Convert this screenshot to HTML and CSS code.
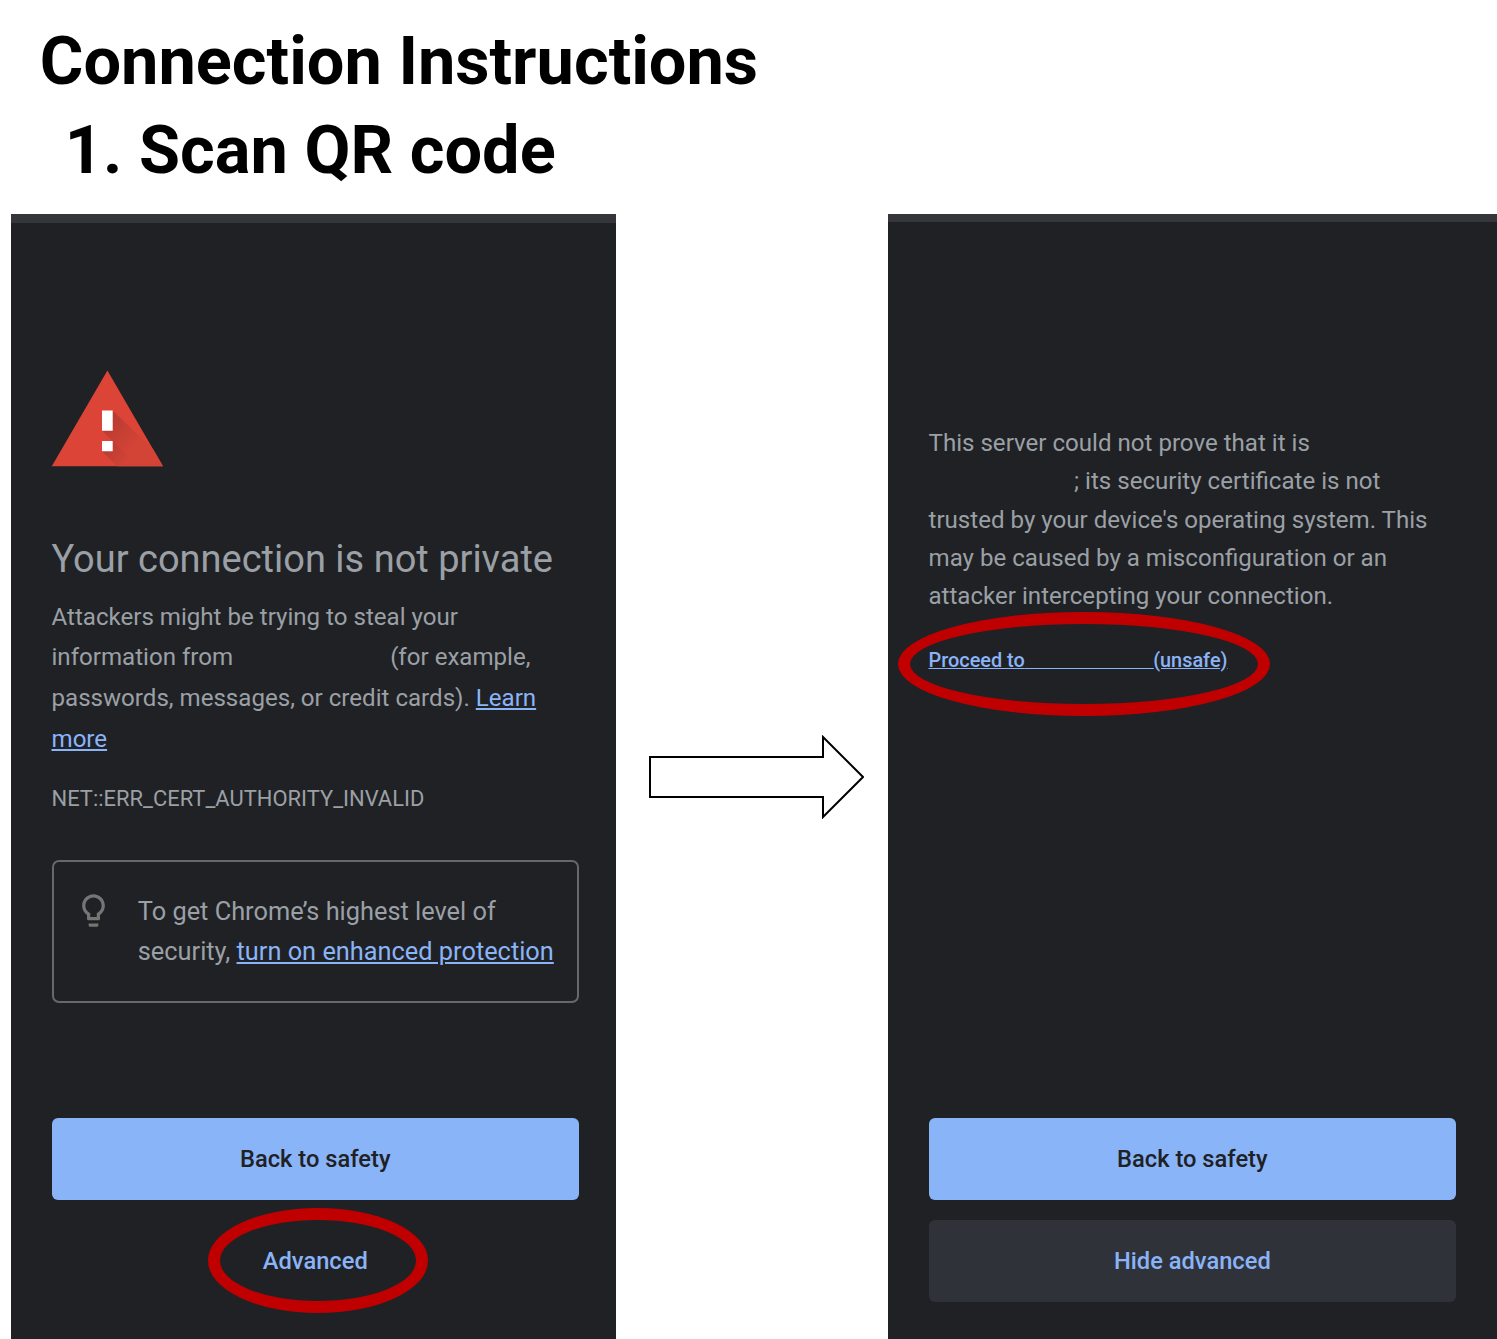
FILE: index.html
```
<!DOCTYPE html>
<html lang="en">
<head>
<meta charset="utf-8">
<title>Connection Instructions</title>
<link rel="stylesheet" href="styles.css">
</head>
<body>
<header class="header">
  <h1 class="heading">Connection Instructions</h1>
  <h2 class="heading step"><span class="step-number">1.</span><span>Scan QR code</span></h2>
</header>
<main class="screens">
  <section class="phone phone-warning">
    <svg class="warning-icon" viewBox="0 0 112 97" aria-hidden="true">
      <defs>
        <linearGradient id="shade" gradientUnits="userSpaceOnUse" x1="55" y1="52" x2="80" y2="77">
          <stop offset="0" stop-color="#b83c32"/>
          <stop offset="1" stop-color="#d34336"/>
        </linearGradient>
        <linearGradient id="shade-dot" gradientUnits="userSpaceOnUse" x1="55" y1="76" x2="72" y2="93">
          <stop offset="0" stop-color="#b83c32"/>
          <stop offset="1" stop-color="#d34336"/>
        </linearGradient>
      </defs>
      <path fill="#db4437" d="M55.4 .6 111 96.3H-.2z"/>
      <path fill="url(#shade)" d="M60.7 40.6 87.5 66.5 101.4 79.8 111 96.3H86L50 60.6z"/>
      <path fill="url(#shade-dot)" d="M60.7 71 86 96.3H65L50 81.2z"/>
      <path fill="#fff" d="M50 40.4h10.7v20.4H50zM50 71h10.7v10.2H50z"/>
    </svg>
    <h3 class="title">Your connection is not private</h3>
    <p class="copy">Attackers might be trying to steal your<br>information from<span class="blank-host"></span>(for example,<br>passwords, messages, or credit cards). <a class="link">Learn<br>more</a></p>
    <p class="error-code">NET::ERR_CERT_AUTHORITY_INVALID</p>
    <div class="tip">
      <svg class="bulb" viewBox="0 0 24 24" aria-hidden="true"><path fill="#757575" d="M9 21c0 .55.45 1 1 1h4c.55 0 1-.45 1-1v-1H9v1zm3-19C8.14 2 5 5.14 5 9c0 2.38 1.19 4.47 3 5.74V17c0 .55.45 1 1 1h6c.55 0 1-.45 1-1v-2.26c1.81-1.27 3-3.36 3-5.74 0-3.86-3.14-7-7-7zm2.85 11.1l-.85.6V16h-4v-2.3l-.85-.6C7.8 12.16 7 10.63 7 9c0-2.76 2.24-5 5-5s5 2.24 5 5c0 1.63-.8 3.16-2.15 4.1z"/></svg>
      <p class="tip-text">To get Chrome’s highest level of<br>security, <a class="link">turn on enhanced protection</a></p>
    </div>
    <div class="actions">
      <div class="button primary">Back to safety</div>
      <div class="button plain">Advanced<span class="ring ring-advanced"></span></div>
    </div>
  </section>
  <svg class="arrow" viewBox="0 0 216 84" aria-hidden="true"><path fill="#fff" stroke="#000" stroke-width="2" d="M2 22H175V2L215 42 175 82V62H2z"/></svg>
  <section class="phone phone-details">
    <p class="details">This server could not prove that it is<br><span class="blank-server"></span>; its security certificate is not<br>trusted by your device's operating system. This<br>may be caused by a misconfiguration or an<br>attacker intercepting your connection.</p>
    <div class="proceed"><a class="link">Proceed to<span class="blank-link"> </span>(unsafe)</a><span class="ring ring-proceed"></span></div>
    <div class="actions">
      <div class="button primary">Back to safety</div>
      <div class="button secondary">Hide advanced</div>
    </div>
  </section>
</main>
</body>
</html>
```
FILE: styles.css
```
* { box-sizing: border-box; }

body {
  margin: 0;
  width: 1497px;
  height: 1339px;
  overflow: hidden;
  background: #fff;
  font-family: Roboto, sans-serif;
}

h1, h2, h3, p { margin: 0; font-weight: 400; }

.header { height: 214px; padding: 16.6px 0 0 39.8px; }

.heading {
  color: #000;
  font-size: 66.7px;
  font-weight: 700;
  line-height: 89px;
  white-space: nowrap;
}

.step { display: flex; padding-left: 24.9px; }
.step-number { width: 74.3px; }

.screens {
  display: flex;
  height: 1125px;
  padding-left: 11px;
}

.phone {
  display: flex;
  flex-direction: column;
  background: #202124;
  color: #9aa0a6;
  white-space: nowrap;
}

.phone-warning {
  width: 605px;
  padding: 147px 37px 0 40.5px;
  border-top: 9px solid #35363a;
}

.phone-details {
  width: 609px;
  padding: 201.7px 40.8px 0 40.5px;
  border-top: 8px solid #35363a;
}

.link {
  color: #8ab4f8;
  text-decoration: underline;
}

.warning-icon { width: 112px; height: 97px; flex: none; overflow: visible; }

.title {
  margin-top: 69px;
  font-size: 38px;
  line-height: 46px;
}

.copy {
  margin-top: 14.9px;
  font-size: 24.1px;
  line-height: 40.6px;
}

.blank-host { display: inline-block; width: 157px; }

.error-code {
  margin-top: 20px;
  font-size: 21.95px;
  line-height: 40px;
}

.tip {
  display: flex;
  height: 143px;
  margin-top: 40.6px;
  padding: 28.9px 0 0 20.7px;
  border: 1.5px solid #65686c;
  border-width: 2px;
  border-radius: 7px;
}

.bulb { width: 39px; height: 39px; flex: none; }

.tip-text {
  margin-left: 24.6px;
  font-size: 25.35px;
  line-height: 40.5px;
}

.actions {
  display: flex;
  flex-direction: column;
  gap: 20px;
  margin-top: auto;
  padding-bottom: 37.5px;
}

.button {
  position: relative;
  height: 81.7px;
  border-radius: 6px;
  font-size: 23.7px;
  font-weight: 500;
  line-height: 82.4px;
  text-align: center;
}

.primary { background: #8ab4f8; color: #202124; }
.plain { color: #8ab4f8; }
.secondary { background: #303239; color: #8ab4f8; }

.ring {
  position: absolute;
  border: 12px solid #c00000;
  border-radius: 50%;
}

.ring-advanced { left: 156.8px; top: -11.6px; width: 220px; height: 104.5px; }
.ring-proceed { left: -30.3px; top: -36.2px; width: 372px; height: 104.5px; }

.arrow {
  width: 216px;
  height: 84px;
  margin: 521px 24px 0 32px;
  flex: none;
}

.details { font-size: 24.1px; line-height: 38.4px; }
.blank-server { display: inline-block; width: 145.5px; }

.proceed {
  position: relative;
  margin-top: 32px;
  font-size: 19.9px;
  font-weight: 500;
  line-height: 26px;
}

.blank-link { word-spacing: 123.4px; }
```
